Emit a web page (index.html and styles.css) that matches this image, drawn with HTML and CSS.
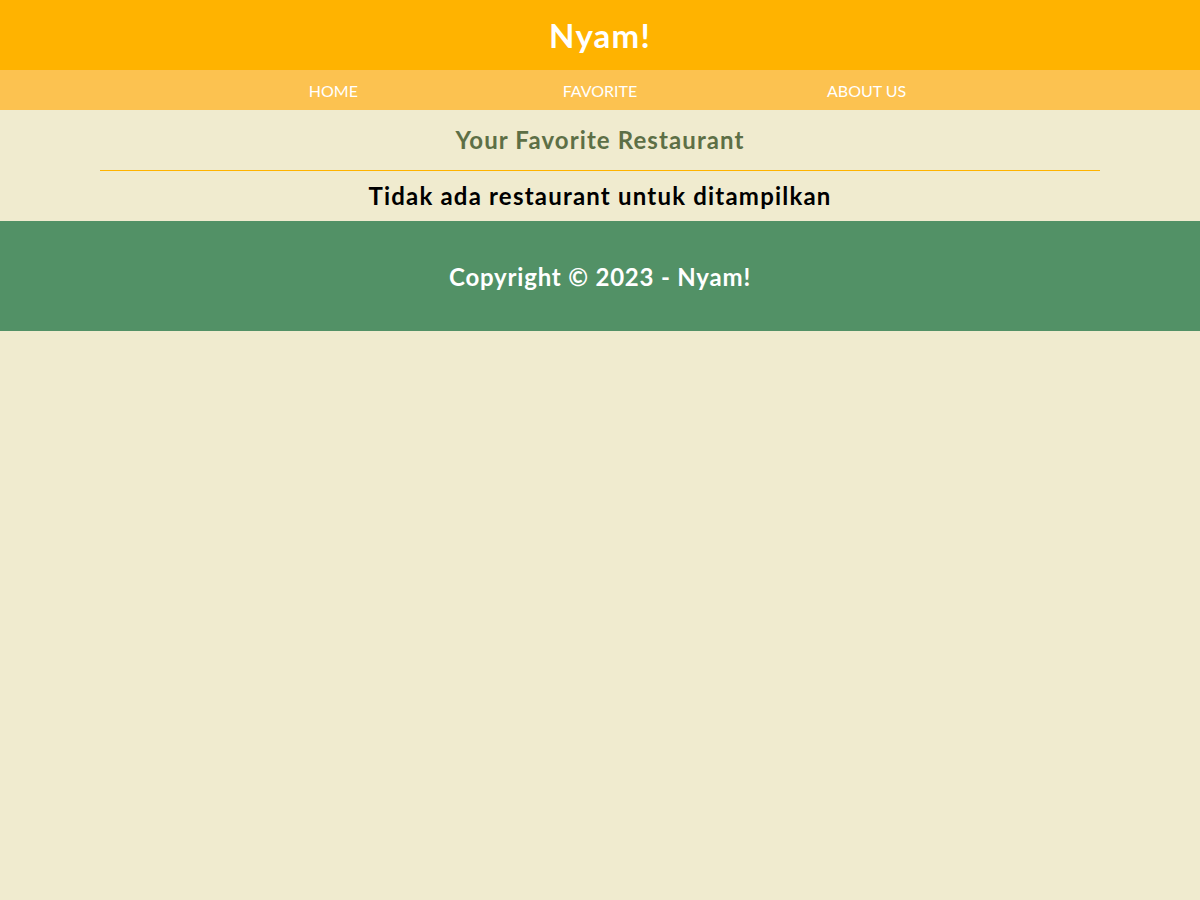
FILE: index.html
```html
<!DOCTYPE html>
<html lang="id">
<head>
<meta charset="utf-8">
<title>Nyam!</title>
<link rel="stylesheet" href="styles.css">
</head>
<body>
<header class="app-bar">
  <h1 class="app-bar__title">Nyam!</h1>
</header>
<nav class="nav">
  <ul class="nav__list">
    <li class="nav__item"><a href="#">HOME</a></li>
    <li class="nav__item"><a href="#">FAVORITE</a></li>
    <li class="nav__item"><a href="#">ABOUT US</a></li>
  </ul>
</nav>
<main class="content">
  <h2 class="content__heading">Your Favorite Restaurant</h2>
  <div class="content__divider"></div>
  <p class="content__empty">Tidak ada restaurant untuk ditampilkan</p>
</main>
<footer class="footer">
  <p class="footer__text">Copyright © 2023 - Nyam!</p>
</footer>
</body>
</html>
```

FILE: styles.css
```css
* { box-sizing: border-box; }
html, body {
  margin: 0;
  padding: 0;
  background: #f0ebcf;
  font-family: "Lato", "Noto Sans", sans-serif;
}
.app-bar {
  height: 70px;
  background: #ffb300;
  display: flex;
  align-items: center;
  justify-content: center;
}
.app-bar__title {
  margin: 0;
  color: #fff;
  font-size: 33px;
  font-weight: 700;
  letter-spacing: 1.2px;
}
.nav {
  height: 40px;
  background: #fcc250;
  display: flex;
  justify-content: center;
}
.nav__list {
  list-style: none;
  margin: 0;
  padding: 0;
  width: 800px;
  display: grid;
  grid-template-columns: repeat(3, 1fr);
  align-items: center;
}
.nav__item {
  text-align: center;
}
.nav__item a {
  color: #fff;
  text-decoration: none;
  font-size: 16px;
}
.content {
  display: flex;
  flex-direction: column;
  align-items: center;
  padding-top: 15px;
}
.content__heading {
  margin: 0;
  color: #5d6f46;
  font-size: 24px;
  font-weight: 700;
  line-height: 30px;
  letter-spacing: 1.1px;
}
.content__divider {
  width: 1000px;
  height: 1px;
  background: #ffb300;
  margin-top: 15px;
}
.content__empty {
  margin: 0;
  padding: 10px 0 10px;
  font-size: 24px;
  font-weight: 700;
  line-height: 30px;
  letter-spacing: 1.2px;
  color: #000;
}
.footer {
  height: 110px;
  background: #529166;
  display: flex;
  align-items: center;
  justify-content: center;
}
.footer__text {
  margin: 0;
  color: #fff;
  font-size: 24px;
  font-weight: 700;
  letter-spacing: 0.8px;
}
```
